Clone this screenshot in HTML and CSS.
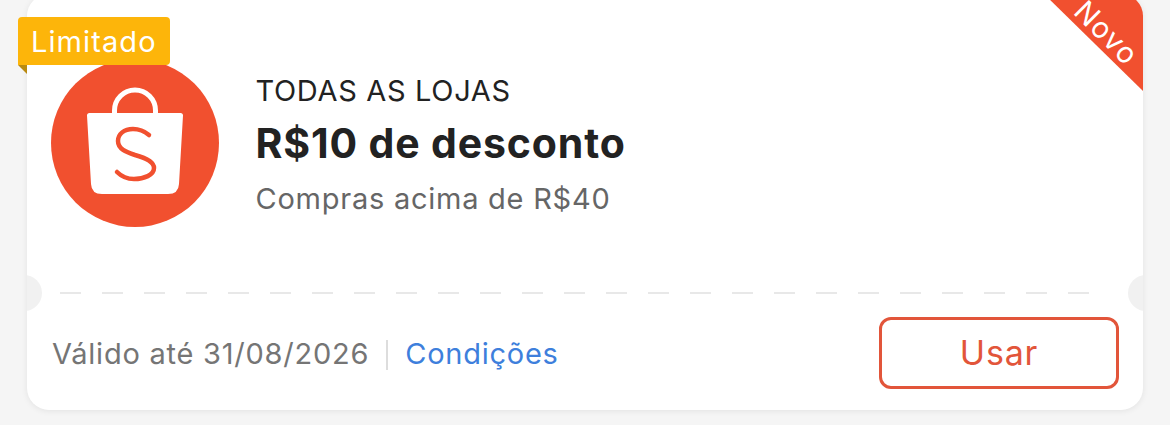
FILE: index.html
```html
<!DOCTYPE html>
<html lang="pt-BR">
<head>
<meta charset="utf-8">
<title>Cupom</title>
<link rel="stylesheet" href="styles.css">
</head>
<body>
<div class="card">
  <div class="ribbon"><span class="ribbon-text">Novo</span></div>
  <div class="top">
    <svg class="logo" viewBox="0 0 168 168" aria-hidden="true">
      <circle cx="84" cy="84" r="84" fill="#f1502f"/>
      <path d="M63.500 56 V51.500 A20.500 20.500 0 0 1 104.500 51.500 V56" fill="none" stroke="#fff" stroke-width="5"/>
      <path d="M38.500 54 H129.500 Q132 54 132 56.500 L128 125 Q127.500 135 117 135 H51 Q40.500 135 40 125 L36 56.500 Q36 54 38.500 54 Z" fill="#fff"/>
      <path d="M98 76 C92 71 87 70 82 70 C73 70 67 75 67 82 C67 90 75 93 84 96 C95 99 103 103 103 109 C103 116 93 120 83 120 C76 120 71 118 66 113" fill="none" stroke="#f1502f" stroke-width="4.500" stroke-linecap="round"/>
    </svg>
    <div class="info">
      <div class="scope">TODAS AS LOJAS</div>
      <div class="title">R$10 de desconto</div>
      <div class="minimum">Compras acima de R$40</div>
    </div>
  </div>
  <div class="divider">
    <span class="notch notch-left"></span>
    <span class="dash"></span>
    <span class="notch notch-right"></span>
  </div>
  <div class="bottom">
    <div class="meta">
      <span class="valid">Válido até 31/08/2026</span>
      <span class="sep"></span>
      <span class="terms">Condições</span>
    </div>
    <div class="use">Usar</div>
  </div>
</div>
<div class="tag">Limitado</div>
</body>
</html>
```
FILE: styles.css
```css
* { box-sizing: border-box; }
html, body { margin: 0; height: 425px; overflow: hidden; }
body {
  position: relative;
  background: #f5f5f5;
  font-family: Inter, "Noto Sans", sans-serif;
}
.card {
  position: relative;
  width: 1116px;
  height: 416px;
  margin: -6px 0 0 27px;
  background: #fff;
  border-radius: 22px;
  overflow: hidden;
  box-shadow: 0 1px 6px rgba(0, 0, 0, .08);
  display: flex;
  flex-direction: column;
}
.tag {
  position: absolute;
  left: 18px;
  top: 17px;
  width: 152px;
  height: 48px;
  padding-left: 13px;
  background: #fdb50a;
  border-radius: 4px 4px 4px 0;
  color: #fff;
  font-size: 29px;
  line-height: 49px;
  letter-spacing: 1.1px;
}
.tag::after {
  content: "";
  position: absolute;
  left: 0;
  top: 48px;
  border-style: solid;
  border-width: 0 9px 9px 0;
  border-color: transparent #b98a10 transparent transparent;
}
.ribbon {
  position: absolute;
  right: 0;
  top: 0;
  width: 99px;
  height: 97px;
  background: #f1502f;
  clip-path: polygon(0 0, 100% 0, 100% 100%);
}
.ribbon-text {
  position: absolute;
  left: 24px;
  top: 22px;
  color: #fff;
  font-size: 29px;
  line-height: 34px;
  letter-spacing: 1.2px;
  transform: rotate(45deg);
}
.top {
  height: 275px;
  padding: 65px 0 0 24px;
  display: flex;
  gap: 37px;
}
.logo { width: 168px; height: 168px; flex: none; }
.info { padding-top: 15px; margin-left: -.5px; }
.scope {
  color: #222;
  font-size: 29px;
  line-height: 34px;
  letter-spacing: .67px;
}
.title {
  margin-top: 12px;
  color: #222;
  font-size: 41px;
  font-weight: 700;
  line-height: 46px;
  letter-spacing: .85px;
}
.minimum {
  margin-top: 16px;
  color: #666;
  font-size: 29px;
  line-height: 34px;
  letter-spacing: .75px;
}
.divider {
  position: relative;
  height: 48px;
  padding: 23px 52px 0 33px;
}
.dash {
  display: block;
  height: 2px;
  background: repeating-linear-gradient(90deg, #e8e8e8 0 21px, transparent 21px 42px);
}
.notch {
  position: absolute;
  top: 6px;
  width: 36px;
  height: 36px;
  border-radius: 50%;
  background: #f1f1f1;
}
.notch-left { left: -21px; }
.notch-right { right: -21px; }
.bottom {
  padding: 0 24px 0 25px;
  display: flex;
  align-items: flex-start;
  justify-content: space-between;
}
.meta {
  display: flex;
  align-items: center;
  height: 73px;
  font-size: 29px;
  letter-spacing: .76px;
}
.valid { color: #757575; }
.sep {
  width: 2px;
  height: 30px;
  margin: 3px 17px 0 17px;
  background: #ddd;
}
.terms { color: #3e7fdc; }
.use {
  width: 240px;
  height: 72px;
  border: 3px solid #e2553a;
  border-radius: 12px;
  color: #e2553a;
  font-size: 34px;
  line-height: 66px;
  letter-spacing: .8px;
  text-align: center;
}
```
